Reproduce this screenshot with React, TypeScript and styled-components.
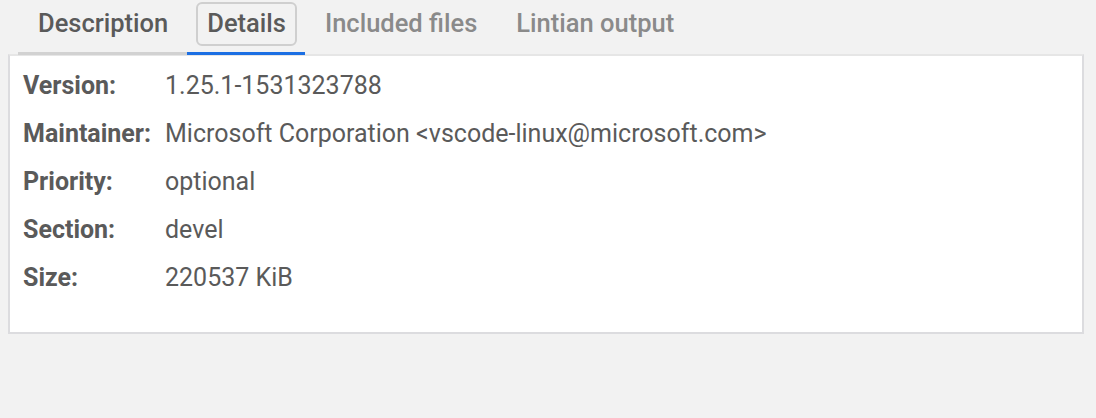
import * as React from 'react';
import styled, {createGlobalStyle} from 'styled-components';

const GlobalStyle = createGlobalStyle`
    html, body {
        margin: 0;
        padding: 0;
        background: #f2f2f2;
    }
    body {
        font-family: Roboto, "Liberation Sans", sans-serif;
    }
`

const Page = styled.div`
    padding: 0 12px 0 8px;
    height: 418px;
    box-sizing: border-box;
`
const TabRow = styled.div`
    display: flex;
    margin: 0 0 -1px 10px;
    position: relative;
    z-index: 1;
`
const Tab = styled.div<{$state: 'active' | 'hover' | 'idle'}>`
    box-sizing: border-box;
    height: 55px;
    padding: 2px 8px 0 9px;
    border-bottom: 3px solid ${p => p.$state === 'active' ? '#1c6fe3' : p.$state === 'hover' ? '#d2d2d2' : 'transparent'};
    color: ${p => p.$state === 'idle' ? '#8a8a8a' : '#5a5a5a'};
    font-size: 25.5px;
    font-weight: 500;
`
const TabLabel = styled.span<{$focused?: boolean}>`
    display: flex;
    align-items: center;
    box-sizing: border-box;
    height: 44px;
    padding: 0 9px 2px 9px;
    border: 2px solid ${p => p.$focused ? '#cfcfcf' : 'transparent'};
    border-radius: 6px;
`
const Panel = styled.div`
    background: #fff;
    border: 2px solid #dcdcdf;
    border-top-color: #e6e6e6;
    padding: 5px 0 31px 13px;
`
const InfoGrid = styled.div`
    display: grid;
    grid-template-columns: 142px 1fr;
    grid-auto-rows: 48px;
    align-items: center;
    font-size: 25px;
    color: #5a5a5a;
`
const Label = styled.div`
    font-weight: 700;
`
const Value = styled.div`
    font-weight: 400;
`

const tabs = [
    {name: 'Description', state: 'hover' as const},
    {name: 'Details', state: 'active' as const},
    {name: 'Included files', state: 'idle' as const},
    {name: 'Lintian output', state: 'idle' as const},
];

const details = [
    ['Version:', '1.25.1-1531323788'],
    ['Maintainer:', 'Microsoft Corporation <vscode-linux@microsoft.com>'],
    ['Priority:', 'optional'],
    ['Section:', 'devel'],
    ['Size:', '220537 KiB'],
];

export default function App() {
    return (
        <>
            <GlobalStyle/>
            <Page>
                <TabRow>
                    {tabs.map(t => (
                        <Tab key={t.name} $state={t.state}>
                            <TabLabel $focused={t.state === 'active'}>{t.name}</TabLabel>
                        </Tab>
                    ))}
                </TabRow>
                <Panel>
                    <InfoGrid>
                        {details.map(([k, v]) => (
                            <React.Fragment key={k}>
                                <Label>{k}</Label>
                                <Value>{v}</Value>
                            </React.Fragment>
                        ))}
                    </InfoGrid>
                </Panel>
            </Page>
        </>
    );
}
